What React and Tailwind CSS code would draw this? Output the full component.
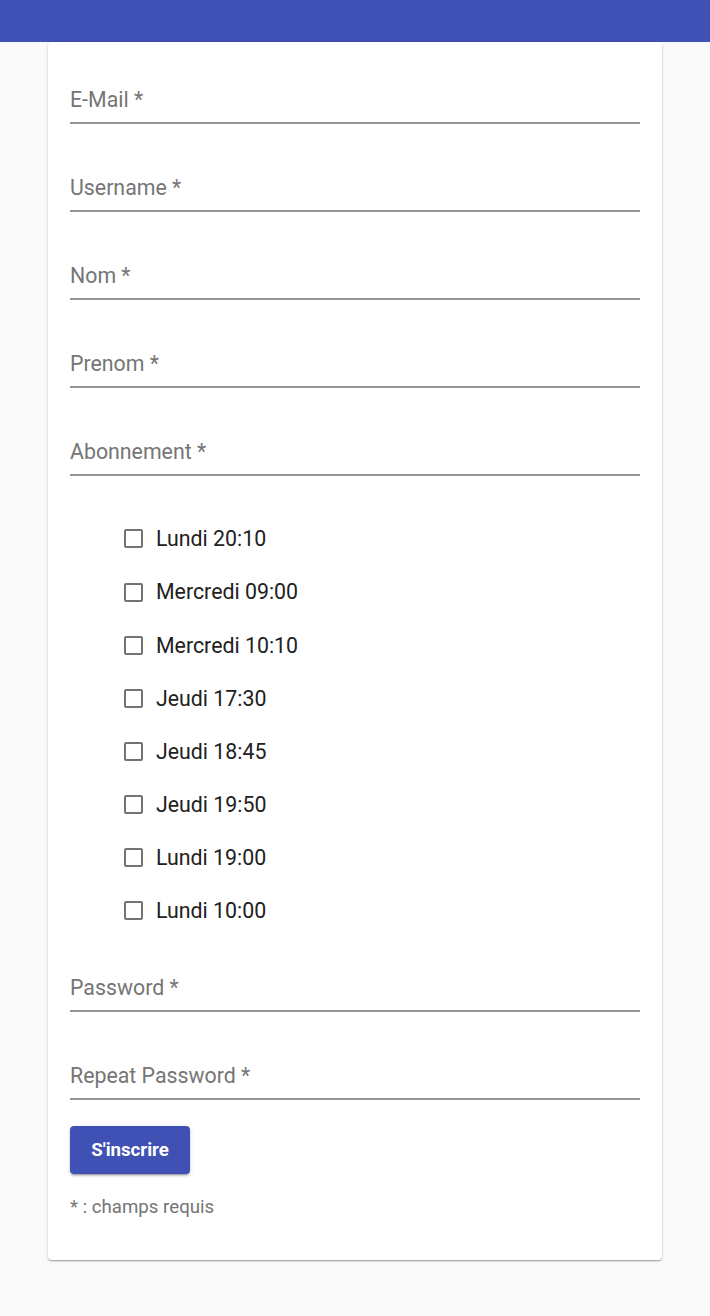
export default function App() {
  const fields1 = ["E-Mail *", "Username *", "Nom *", "Prenom *", "Abonnement *"];
  const slots = [
    "Lundi 20:10",
    "Mercredi 09:00",
    "Mercredi 10:10",
    "Jeudi 17:30",
    "Jeudi 18:45",
    "Jeudi 19:50",
    "Lundi 19:00",
    "Lundi 10:00",
  ];
  const Field = ({ label, mt }) => (
    <div className={mt}>
      <div className="h-[34px] flex items-center text-[21.33px] text-[#757575] leading-none">{label}</div>
      <div className="mt-[5px] h-[2px] bg-[#959595]" />
    </div>
  );
  return (
    <div className="min-h-[1316px] bg-[#fafafa]" style={{ fontFamily: "Roboto, 'Liberation Sans', sans-serif" }}>
      <div className="h-[42px] bg-[#3f51b5]" />
      <div className="mx-[48px] bg-white rounded-[4px] shadow-[0_1px_3px_rgba(0,0,0,0.2),0_1px_1px_rgba(0,0,0,0.14),0_2px_1px_-1px_rgba(0,0,0,0.12)] px-[22px] pb-[43.5px] pt-[2px]">
        {fields1.map((f, i) => (
          <Field key={f} label={f} mt={i === 0 ? "mt-[39px]" : "mt-[47px]"} />
        ))}
        <div className="mt-[36.4px] pl-[54px] flex flex-col">
          {slots.map((s) => (
            <div key={s} className="h-[53.14px] flex items-center">
              <span className="w-[19px] h-[19px] border-2 border-[#737373] rounded-[2px] mr-[13px] shrink-0" />
              <span className="text-[21.33px] text-[#212121] leading-none">{s}</span>
            </div>
          ))}
        </div>
        <Field label="Password *" mt="mt-[33.4px]" />
        <Field label="Repeat Password *" mt="mt-[47px]" />
        <button className="mt-[26px] w-[120px] h-[48px] rounded-[4px] bg-[#3f51b5] text-white font-bold text-[18.67px] shadow-[0_3px_1px_-2px_rgba(0,0,0,0.2),0_2px_2px_0_rgba(0,0,0,0.14),0_1px_5px_0_rgba(0,0,0,0.12)]">
          S'inscrire
        </button>
        <div className="mt-[24.5px] text-[18.67px] text-[#757575] leading-none">* : champs requis</div>
      </div>
    </div>
  );
}
